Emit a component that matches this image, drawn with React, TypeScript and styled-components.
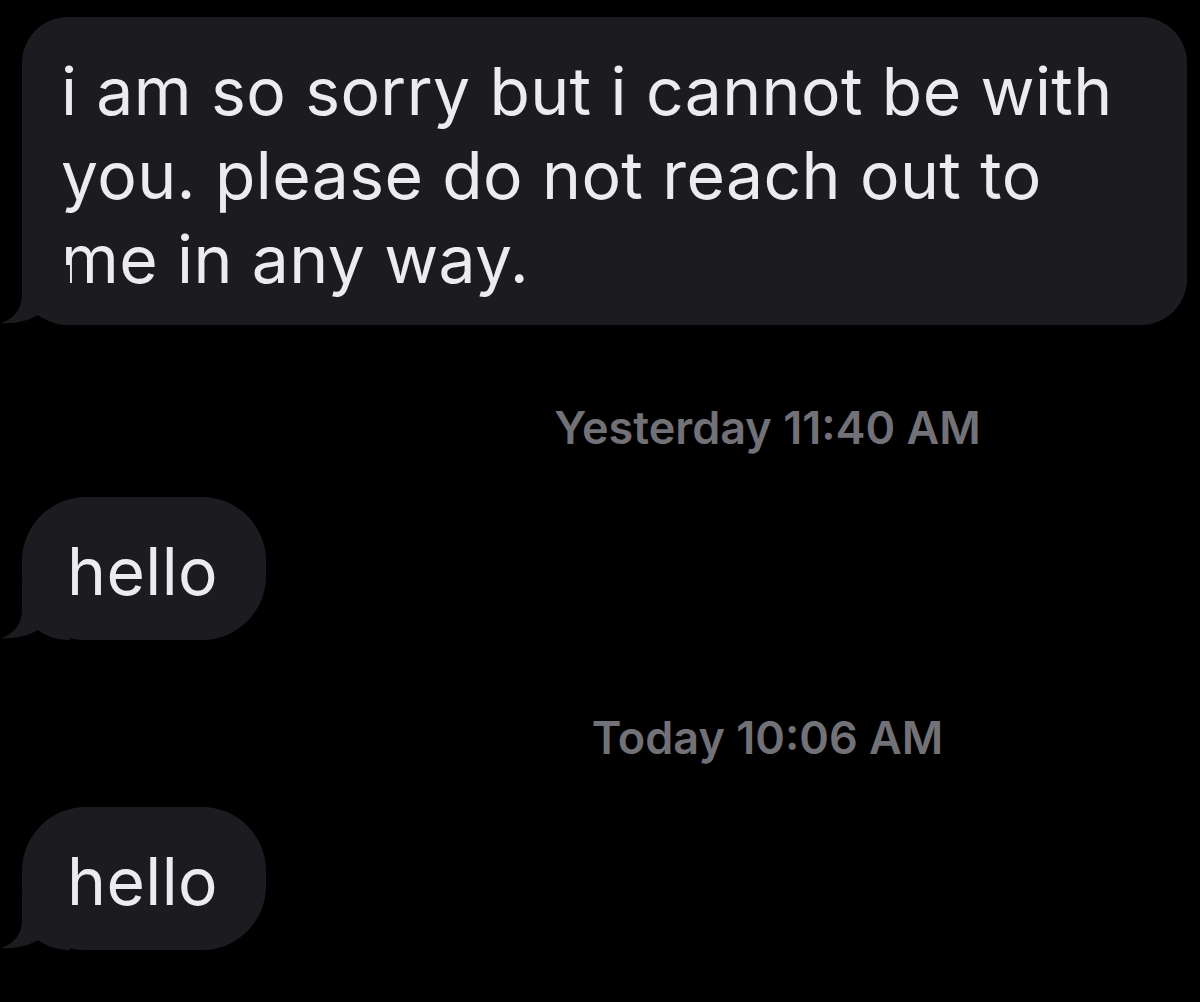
import React from "react";
import styled, { createGlobalStyle } from "styled-components";

const GlobalStyle = createGlobalStyle`
  html, body {
    margin: 0;
    padding: 0;
    background: #000000;
  }
  body {
    font-family: Inter, "Liberation Sans", Arial, sans-serif;
    -webkit-font-smoothing: antialiased;
  }
`;

const Thread = styled.div`
  display: flex;
  flex-direction: column;
  align-items: flex-start;
  width: 1200px;
  height: 1002px;
  box-sizing: border-box;
  padding: 17px 13px 0 22px;
  background: #000000;
  overflow: hidden;
`;

const Bubble = styled.div<{ $wide?: boolean; $gap: number }>`
  position: relative;
  box-sizing: border-box;
  margin-top: ${(p) => p.$gap}px;
  width: ${(p) => (p.$wide ? "1165px" : "auto")};
  padding: ${(p) => (p.$wide ? "32px 40px 24px 39px" : "32px 48px 27px 45px")};
  background: #1c1b20;
  border-radius: ${(p) => (p.$wide ? "46px" : "64px")};
  color: #ececee;
  font-size: 66px;
  line-height: 84px;
  font-weight: 400;
  letter-spacing: 0.4px;
  white-space: nowrap;
`;

const Tail = styled.svg`
  position: absolute;
  left: -22px;
  bottom: 0;
  width: 70px;
  height: 60px;
  display: block;
`;

const Stamp = styled.div<{ $gap: number }>`
  align-self: stretch;
  margin-top: ${(p) => p.$gap}px;
  padding-left: 326px;
  text-align: center;
  color: #727177;
  font-size: 45px;
  line-height: 56px;
  font-weight: 600;
`;

const BubbleTail = () => (
  <Tail viewBox="0 0 70 60" aria-hidden="true">
    <path
      d="M22 0 L22 30 C22 44 14 54 1 58 C14 59 28 56 38 50 C46 56 56 60 70 60 L70 0 Z"
      fill="#1c1b20"
    />
  </Tail>
);

const Message = ({
  children,
  wide,
  gap,
}: {
  children: React.ReactNode;
  wide?: boolean;
  gap: number;
}) => (
  <Bubble $wide={wide} $gap={gap}>
    <BubbleTail />
    {children}
  </Bubble>
);

export default function App() {
  return (
    <>
      <GlobalStyle />
      <Thread>
        <Message wide gap={0}>
          i am so sorry but i cannot be with
          <br />
          you. please do not reach out to
          <br />
          me in any way.
        </Message>
        <Stamp $gap={75}>Yesterday 11:40 AM</Stamp>
        <Message gap={41}>hello</Message>
        <Stamp $gap={70}>Today 10:06 AM</Stamp>
        <Message gap={41}>hello</Message>
      </Thread>
    </>
  );
}
